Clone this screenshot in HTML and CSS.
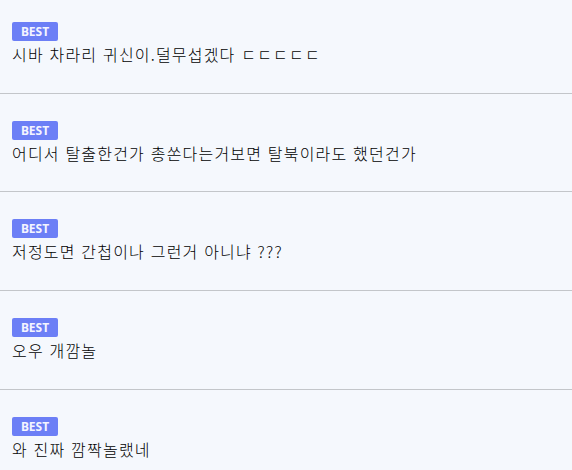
FILE: index.html
```html
<!DOCTYPE html>
<html lang="ko">
<head>
<meta charset="utf-8">
<link rel="stylesheet" href="styles.css">
</head>
<body>
<ul class="list">
  <li class="item first"><span class="badge">BEST</span><p class="text">시바 차라리 귀신이.덜무섭겠다 ㄷㄷㄷㄷㄷ</p></li>
  <li class="item short"><span class="badge">BEST</span><p class="text">어디서 탈출한건가 총쏜다는거보면 탈북이라도 했던건가</p></li>
  <li class="item"><span class="badge">BEST</span><p class="text">저정도면 간첩이나 그런거 아니냐 ???</p></li>
  <li class="item"><span class="badge">BEST</span><p class="text">오우 개깜놀</p></li>
  <li class="item"><span class="badge">BEST</span><p class="text">와 진짜 깜짝놀랬네</p></li>
</ul>
</body>
</html>
```
FILE: styles.css
```css
html, body {
  margin: 0;
  padding: 0;
  background: #f5f8fd;
}
body {
  font-family: "Noto Sans CJK KR", "Noto Sans", sans-serif;
  color: #000;
  overflow: hidden;
}
.list {
  list-style: none;
  margin: 0;
  padding: 0;
}
.item {
  display: flex;
  flex-direction: column;
  align-items: flex-start;
  padding: 27px 12px 0;
  height: 71px;
  border-top: 1px solid #c3c6ca;
}
.item.first {
  border-top: none;
  padding-top: 22px;
}
.item.short {
  height: 70px;
}
.badge {
  display: flex;
  align-items: center;
  justify-content: center;
  width: 46px;
  height: 19px;
  border-radius: 2px;
  background: #6c7ff6;
  color: #f4f5ff;
  font-family: "Noto Sans", sans-serif;
  font-weight: 700;
  font-size: 12px;
  line-height: 19px;
}
.text {
  margin: 3px 0 0;
  font-size: 16px;
  font-weight: 300;
  letter-spacing: 1.2px;
  line-height: 21px;
}
```
